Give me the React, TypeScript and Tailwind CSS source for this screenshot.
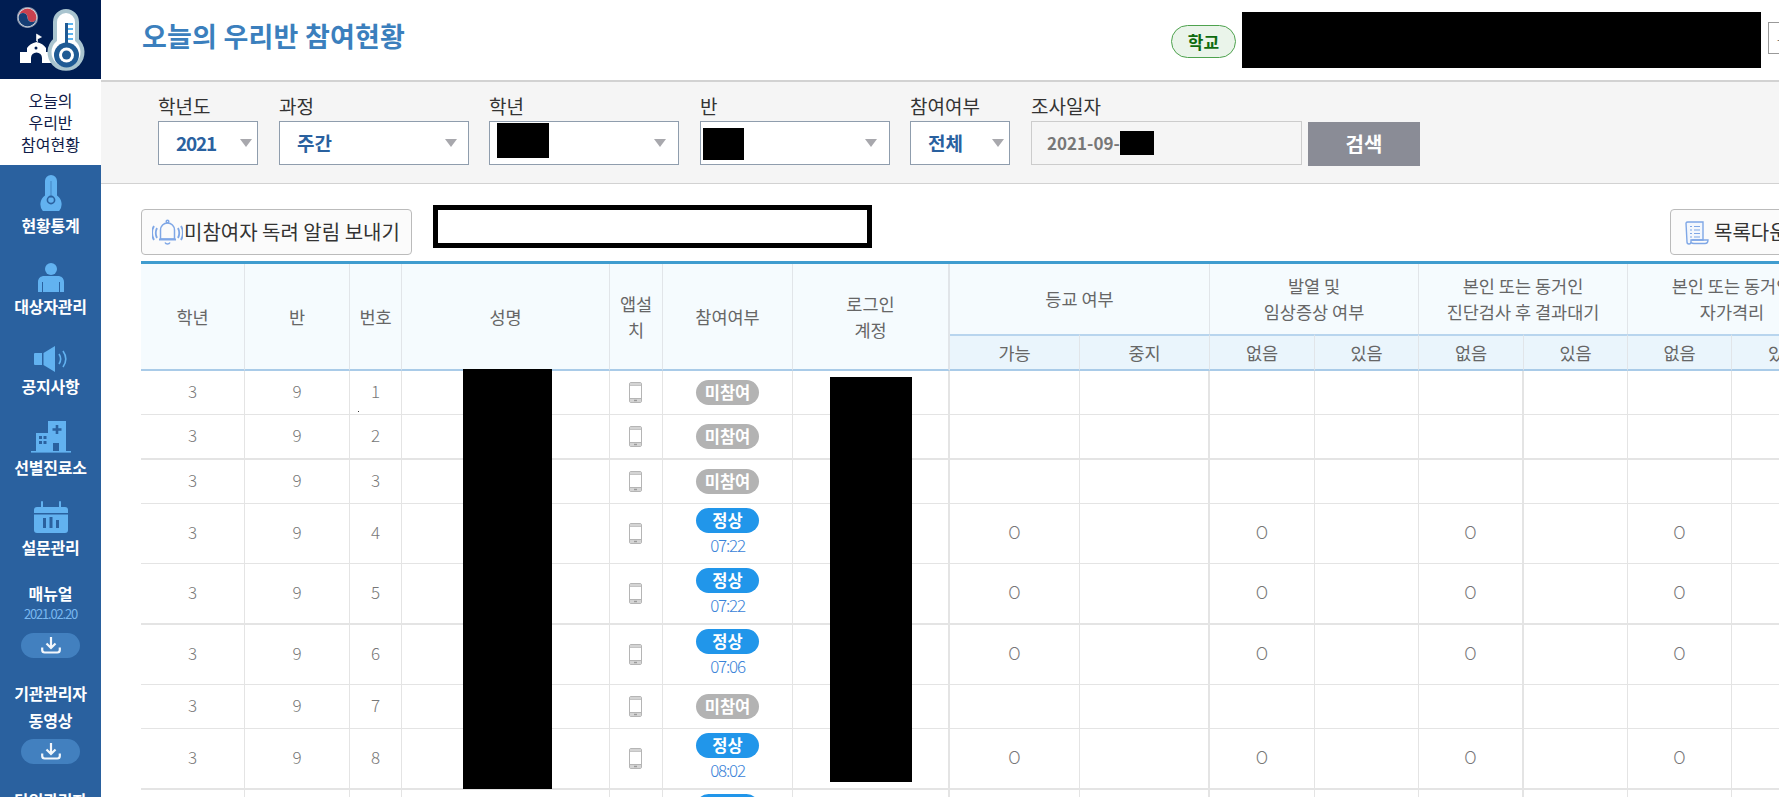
import React from "react";

const ICON = "#62b2f0";

function Thermo() {
  return (
    <svg width="22" height="36" viewBox="0 0 22 36">
      <path d="M5 20.500V6a6 6 0 0 1 12 0v14.500a10.600 10.600 0 1 1-12 0z" fill={ICON} />
      <path d="M11 6v17" stroke="#2a619f" strokeWidth="1.200" opacity="0.45" />
      <circle cx="11" cy="25" r="3.600" fill="none" stroke="#2a619f" strokeWidth="1.600" />
    </svg>
  );
}
function Person() {
  return (
    <svg width="26" height="29" viewBox="0 0 26 29">
      <circle cx="13" cy="6" r="6" fill={ICON} />
      <path d="M0 29V19c0-4 3-6 6-6h14c3 0 6 2 6 6v10h-4V19h-1v10H5V19H4v10z" fill={ICON} />
    </svg>
  );
}
function Speaker() {
  return (
    <svg width="34" height="26" viewBox="0 0 34 26">
      <path d="M1 7h7v12H1a1 1 0 0 1-1-1V8a1 1 0 0 1 1-1z" fill={ICON} />
      <path d="M9.500 7 21 0v26L9.500 19z" fill={ICON} />
      <path d="M25 8c2 3 2 7 0 10M29 5c3.500 5 3.500 11 0 16" fill="none" stroke={ICON} strokeWidth="1.600" />
    </svg>
  );
}
function Hospital() {
  return (
    <svg width="40" height="33" viewBox="0 0 40 33">
      <path d="M5 31V13h12V1h18v30h-7v-8h-6v8z" fill={ICON} />
      <rect x="0" y="31" width="40" height="1.600" fill={ICON} />
      <path d="M26 5v9M21.500 9.500h9" stroke="#2a619f" strokeWidth="2.600" />
      <path d="M8 16h3v3H8zM12.500 16h3v3h-3zM8 21h3v3H8zM12.500 21h3v3h-3z" fill="#2a619f" />
    </svg>
  );
}
function Calendar() {
  return (
    <svg width="34" height="32" viewBox="0 0 34 32">
      <path d="M0 9a3 3 0 0 1 3-3h28a3 3 0 0 1 3 3v3H0z" fill={ICON} />
      <path d="M0 13.500h34V29a3 3 0 0 1-3 3H3a3 3 0 0 1-3-3z" fill={ICON} />
      <path d="M8 1v7M26 1v7" stroke={ICON} strokeWidth="2" strokeLinecap="round" />
      <path d="M9 17h3v10H9zM15.500 16h3v11h-3zM22 19h3v8h-3z" fill="#2a619f" />
    </svg>
  );
}
function DownloadPill() {
  return (
    <div className="flex h-[25px] w-[59px] items-center justify-center rounded-full bg-[#4280bf]">
      <svg width="20" height="18" viewBox="0 0 20 18" fill="none" stroke="#f2f6fb" strokeWidth="2.200">
        <path d="M10 1v10M5.500 7.500 10 12l4.500-4.500" />
        <path d="M1.200 11.500v2.500a2.500 2.500 0 0 0 2.500 2.500h12.600a2.500 2.500 0 0 0 2.500-2.500v-2.500" />
      </svg>
    </div>
  );
}
function Logo() {
  return (
    <svg width="101" height="79" viewBox="0 0 101 79">
      <circle cx="27.500" cy="17.500" r="10" fill="#fff" stroke="#8a97ad" strokeWidth="1.200" />
      <path d="M18.500 17.500a9 9 0 0 1 18 0 4.500 4.500 0 0 1-9 0 4.500 4.500 0 0 0-9 0z" fill="#c9414f" />
      <path d="M18.500 17.500a9 9 0 0 0 18 0 4.500 4.500 0 0 1-9 0 4.500 4.500 0 0 0-9 0z" fill="#153e75" />
      <path d="M36.500 41v-7l5 3-4 2v3" fill="#fff" stroke="#fff" strokeWidth="0.600" />
      <path d="M20 63V52h7v-4c2-3 5-5 9.500-6 4.500 1 7.500 3 9.500 6v4h6v11h-10v-5a5.500 5.500 0 0 0-11 0v5z" fill="#fff" />
      <circle cx="36" cy="48" r="1.500" fill="#001d52" />
      <path d="M55 40V22a11 11 0 0 1 22 0v18a16.500 16.500 0 1 1-22 0z" fill="#fff" stroke="#a9c4cf" strokeWidth="4" />
      <circle cx="66.500" cy="55" r="12.500" fill="#1f5a94" />
      <circle cx="66.500" cy="55" r="7.500" fill="#fff" />
      <circle cx="66.500" cy="55" r="4.500" fill="#1f5a94" />
      <path d="M65 23h3v23h-3z" fill="#1f5a94" />
      <path d="M68 24h5M68 29h5M68 34h5M68 39h5" stroke="#5db4ee" strokeWidth="2" />
    </svg>
  );
}
function Bell() {
  return (
    <svg width="31" height="27" viewBox="0 0 31 27" fill="none" stroke="#7fa7e6" strokeWidth="1.500">
      <circle cx="15.500" cy="2.500" r="1.300" />
      <path d="M8.500 20v-9a7 7 0 0 1 14 0v9z" />
      <path d="M7 20.500h17" strokeWidth="2" />
      <path d="M13 23.500a2.800 2.800 0 0 0 5 0" />
      <path d="M5 9c-1.500 3-1.500 7 0 10M2 7c-2.500 4-2.500 10 0 14M26 9c1.500 3 1.500 7 0 10M29 7c2.500 4 2.500 10 0 14" strokeWidth="1.800" />
    </svg>
  );
}
function Doc() {
  return (
    <svg width="24" height="25" viewBox="0 0 24 25" fill="none" stroke="#7fa7e6" strokeWidth="1.400">
      <path d="M1 3a2 2 0 0 1 2-1h15v18H6v2a2 2 0 0 1-4 0z" fill="#f3f7fd" />
      <path d="M6 22.500c1 1 1.500 1 3 1h11c2 0 3-1 3-3.500H6.500" />
      <path d="M5 6.500h2M9 6.500h6M5 10h2M9 10h6M5 13.500h2M9 13.500h6M5 17h2M9 17h6" strokeWidth="1.100" />
    </svg>
  );
}
function Phone() {
  return (
    <svg width="13" height="21" viewBox="0 0 13 21" fill="none" stroke="#b5b5b5" strokeWidth="1">
      <rect x="0.500" y="0.500" width="12" height="20" rx="1.500" />
      <path d="M1 3.500h11M1 16.500h11" />
      <rect x="1" y="1" width="11" height="2.500" fill="#d4d4d4" stroke="none" />
      <rect x="1" y="17" width="11" height="3" fill="#d4d4d4" stroke="none" />
      <rect x="5" y="17.800" width="3" height="1.400" fill="#9a9a9a" stroke="none" />
    </svg>
  );
}
function Caret() {
  return (
    <svg width="12" height="8" viewBox="0 0 12 8">
      <path d="M0 0h12L6 8z" fill="#a8a8ad" />
    </svg>
  );
}

const NAV = [
  { icon: <Thermo />, label: "현황통계" },
  { icon: <Person />, label: "대상자관리" },
  { icon: <Speaker />, label: "공지사항" },
  { icon: <Hospital />, label: "선별진료소" },
  { icon: <Calendar />, label: "설문관리" },
];

function Sidebar() {
  return (
    <aside className="flex h-[797px] w-[101px] flex-none flex-col items-stretch overflow-hidden bg-[#2a619f] text-white">
      <div className="h-[79px] flex-none bg-[#001d52]">
        <Logo />
      </div>
      <div className="flex h-[86px] flex-none flex-col items-center justify-center bg-white text-[16px] leading-[22px] text-[#101c48]">
        <div>오늘의</div>
        <div>우리반</div>
        <div>참여현황</div>
      </div>
      {NAV.map((n) => (
        <div key={n.label} className="flex h-[80.5px] flex-none flex-col items-center">
          <div className="flex h-[48px] items-end pb-[2px]">{n.icon}</div>
          <div className="whitespace-nowrap text-[16px] font-bold leading-[24px] tracking-[-0.2px]">{n.label}</div>
        </div>
      ))}
      <div className="mt-[13px] flex flex-none flex-col items-center">
        <div className="text-[16px] font-bold leading-[24px]">매뉴얼</div>
        <div className="text-[13px] leading-[18px] tracking-[-1.2px] text-[#79b8f0]">2021.02.20</div>
        <div className="mt-[10px]">
          <DownloadPill />
        </div>
        <div className="mt-[23px] whitespace-nowrap text-[16px] font-bold leading-[24px] tracking-[-0.2px]">기관관리자</div>
        <div className="mt-[3px] text-[16px] font-bold leading-[24px]">동영상</div>
        <div className="mt-[7px]">
          <DownloadPill />
        </div>
        <div className="mt-[24px] whitespace-nowrap text-[16px] font-bold leading-[24px] tracking-[-0.2px]">담임관리자</div>
      </div>
    </aside>
  );
}

function Select({ width, value, caretRight, redact, extra }: { width: string; value?: string; caretRight: string; redact?: React.ReactNode; extra?: string }) {
  return (
    <div className={`relative flex h-[44px] items-center border border-[#8f9dad] bg-white pl-[17px] text-[19px] font-bold text-[#2a619f] ${width} ${extra ?? ""}`}>
      {value}
      {redact}
      <span className={`absolute top-[17px] ${caretRight}`}>
        <Caret />
      </span>
    </div>
  );
}

function Field({ label, extra, children }: { label: string; extra?: string; children: React.ReactNode }) {
  return (
    <div className={`flex flex-none flex-col ${extra ?? ""}`}>
      <div className="h-[39px] pt-[11px] text-[19px] leading-[26px] text-[#333]">{label}</div>
      {children}
    </div>
  );
}

function FilterBar() {
  return (
    <div className="flex h-[104px] flex-none gap-[20px] border-y border-t-2 border-[#d2d2d2] bg-[#f5f5f5] pl-[57px]">
      <Field label="학년도">
        <Select width="w-[100px]" value="2021" caretRight="right-[5px]" extra="tracking-[-1.2px]" />
      </Field>
      <Field label="과정" extra="ml-[1px]">
        <Select width="w-[190px]" value="주간" caretRight="right-[11px]" />
      </Field>
      <Field label="학년">
        <Select
          width="w-[190px]"
          caretRight="right-[12px]"
          redact={<span className="absolute left-[7px] top-[1px] h-[35px] w-[52px] bg-black" />}
        />
      </Field>
      <Field label="반" extra="ml-[1px]">
        <Select
          width="w-[190px]"
          caretRight="right-[12px]"
          redact={<span className="absolute left-[2px] top-[6px] h-[32px] w-[41px] bg-black" />}
        />
      </Field>
      <Field label="참여여부">
        <Select width="w-[100px]" value="전체" caretRight="right-[5px]" />
      </Field>
      <div className="ml-[1px] flex flex-none items-start gap-[6px]">
        <Field label="조사일자">
          <div className="relative flex h-[44px] w-[271px] items-center border border-[#cccccc] bg-[#f5f5f5] pl-[15px] text-[17px] font-bold text-[#777]">
            2021-09-
            <span className="absolute left-[88px] top-[9px] h-[24px] w-[34px] bg-black" />
          </div>
        </Field>
        <button className="mt-[40px] flex h-[44px] w-[112px] items-center justify-center bg-[#8a8c96] text-[20px] font-bold text-white">
          검색
        </button>
      </div>
    </div>
  );
}

type Row = { n: number; h: string; status: "none" | "ok"; time?: string; thick?: boolean };
const ROWS: Row[] = [
  { n: 1, h: "h-[44px]", status: "none" },
  { n: 2, h: "h-[45px]", status: "none", thick: true },
  { n: 3, h: "h-[44px]", status: "none" },
  { n: 4, h: "h-[60px]", status: "ok", time: "07:22" },
  { n: 5, h: "h-[61px]", status: "ok", time: "07:22", thick: true },
  { n: 6, h: "h-[60px]", status: "ok", time: "07:06" },
  { n: 7, h: "h-[44px]", status: "none" },
  { n: 8, h: "h-[61px]", status: "ok", time: "08:02", thick: true },
  { n: 9, h: "h-[60px]", status: "ok", time: "07:15" },
];

const WIDTHS = [
  "w-[104px]", "w-[105px]", "w-[52px]", "w-[208px]", "w-[53px]", "w-[130px]", "w-[157px]",
  "w-[130px]", "w-[130px]", "w-[105px]", "w-[104px]", "w-[105px]", "w-[104px]", "w-[104px]", "w-[105px]",
];
const R_THICK = [false, false, false, false, false, false, true, false, true, false, false, true, false, false, false];

const TH = "border-r border-[#e1e5e9] text-center align-middle text-[17.5px] font-normal leading-[26px] text-[#666] bg-[#f5fbfe]";
const SUB = "h-[37px] border-r border-[#e1e5e9] border-b-[2px] border-b-[#a9cbe8] border-t-[2px] border-t-[#b8d5ee] bg-[#eaf5fc] text-center align-middle text-[17.5px] font-normal leading-[20px] text-[#666]";

function Table() {
  return (
    <div className="relative mt-[7px] w-[1696px] flex-none border-t-[3px] border-[#3f9ccf]">
      <table className="w-[1696px] table-fixed border-separate border-spacing-0">
        <colgroup>
          {WIDTHS.map((w, i) => (
            <col key={i} className={w} />
          ))}
        </colgroup>
        <thead>
          <tr className="h-[70px]">
            {["학년", "반", "번호", "성명"].map((t) => (
              <th key={t} rowSpan={2} className={`${TH} border-b-[2px] border-b-[#a9cbe8]`}>{t}</th>
            ))}
            <th rowSpan={2} className={`${TH} border-b-[2px] border-b-[#a9cbe8]`}>앱설<br />치</th>
            <th rowSpan={2} className={`${TH} border-b-[2px] border-b-[#a9cbe8]`}>참여여부</th>
            <th rowSpan={2} className={`${TH} border-b-[2px] border-b-[#a9cbe8] border-r-2`}>로그인<br />계정</th>
            <th colSpan={2} className={TH}>등교 여부</th>
            <th colSpan={2} className={TH}>발열 및<br />임상증상 여부</th>
            <th colSpan={2} className={TH}>본인 또는 동거인<br />진단검사 후 결과대기</th>
            <th colSpan={2} className={TH}>본인 또는 동거인<br />자가격리</th>
          </tr>
          <tr>
            {["가능", "중지", "없음", "있음", "없음", "있음", "없음", "있음"].map((t, i) => (
              <th key={i} className={SUB}>{t}</th>
            ))}
          </tr>
        </thead>
        <tbody>
          {ROWS.map((r) => {
            const bottom = r.thick ? "border-b-2" : "border-b";
            const td = `border-r border-[#e4e4e4] text-center align-middle text-[17px] font-light text-[#777] ${bottom} ${r.h}`;
            const ok = r.status === "ok";
            return (
              <tr key={r.n}>
                <td className={`${td} pb-[3px]`}>3</td>
                <td className={`${td} pb-[3px]`}>9</td>
                <td className={`${td} pb-[3px]`}>{r.n}</td>
                <td className={td}></td>
                <td className={td}>
                  <span className="flex justify-center pr-[2px]"><Phone /></span>
                </td>
                <td className={td}>
                  <div className={`flex flex-col items-center ${ok ? "pb-[2px]" : ""}`}>
                    <span className={`flex h-[25px] w-[63px] items-center justify-center rounded-[13px] text-[16.5px] font-bold leading-none text-white ${ok ? "bg-[#2196ea]" : "bg-[#b3b3b3]"}`}>
                      {ok ? "정상" : "미참여"}
                    </span>
                    {ok && <span className="text-[17px] leading-[24px] tracking-[-1.2px] text-[#3b83d8]">{r.time}</span>}
                  </div>
                </td>
                <td className={`${td} border-r-2`}></td>
                {[0, 1, 2, 3, 4, 5, 6, 7].map((c) => (
                  <td key={c} className={`${td} pb-[3px] ${R_THICK[c + 7] ? "border-r-2" : ""}`}>
                    {ok && c % 2 === 0 ? "O" : ""}
                  </td>
                ))}
              </tr>
            );
          })}
        </tbody>
      </table>
      <span className="absolute left-[322px] top-[105px] h-[420px] w-[89px] bg-black" />
      <span className="absolute left-[689px] top-[113px] h-[405px] w-[82px] bg-black" />
      <span className="absolute left-[217px] top-[147px] h-[1px] w-[1px] bg-[#333]" />
    </div>
  );
}

export default function App() {
  return (
    <div className="flex h-[797px] w-[1779px] overflow-hidden bg-white font-['Noto_Sans_CJK_KR','Noto_Sans',sans-serif]">
      <Sidebar />
      <main className="flex min-w-0 flex-1 flex-col overflow-hidden">
        <header className="flex h-[80px] flex-none items-start">
          <h1 className="mt-[15px] w-[1070px] flex-none pl-[41px] text-[27px] font-bold leading-[42px] tracking-[0.2px] text-[#3b7fbd]">
            오늘의 우리반 참여현황
          </h1>
          <span className="mt-[25px] flex h-[33px] w-[65px] flex-none items-center justify-center rounded-full border border-[#4ea24e] bg-[#eaf4ea] text-[17px] font-bold text-[#0f6b0f]">
            학교
          </span>
          <span className="ml-[6px] mt-[12px] h-[56px] w-[519px] flex-none bg-black" />
          <span className="ml-[7px] mt-[22px] flex h-[32px] w-[40px] flex-none items-center border border-[#999] pl-[8px] text-[14px] text-[#777]">
            -
          </span>
        </header>
        <FilterBar />
        <div className="flex h-[70px] flex-none items-start pl-[40px]">
          <button className="mt-[25px] flex h-[46px] w-[271px] flex-none items-center gap-[1px] whitespace-nowrap rounded-[4px] border border-[#bbbbbb] bg-[#fbfbfb] pl-[10px] text-[20px] text-[#333]">
            <Bell />
            미참여자 독려 알림 보내기
          </button>
          <div className="ml-[21px] mt-[21px] h-[43px] w-[439px] flex-none border-[5px] border-black bg-white" />
          <button className="ml-[798px] mt-[25px] flex h-[46px] w-[180px] flex-none items-center gap-[5px] whitespace-nowrap rounded-[4px] border border-[#bbbbbb] bg-[#fbfbfb] pl-[14px] text-[20px] text-[#333]">
            <Doc />
            목록다운로드
          </button>
        </div>
        <div className="pl-[40px]">
          <Table />
        </div>
      </main>
    </div>
  );
}
